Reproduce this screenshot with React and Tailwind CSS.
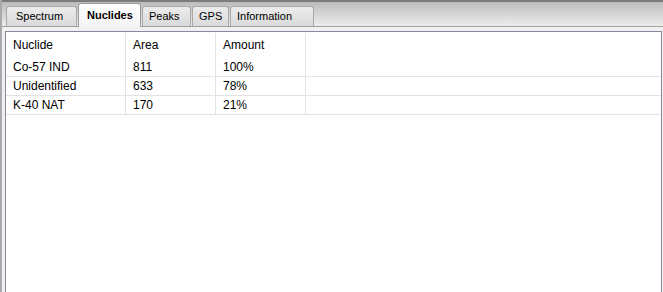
import React from "react";

const tabs = [
  { label: "Spectrum", w: "w-[71px]", pl: "pl-[9px]" },
  { label: "Nuclides", w: "w-[63px]", pl: "pl-[8px]" },
  { label: "Peaks", w: "w-[49px]", pl: "pl-[6px]" },
  { label: "GPS", w: "w-[37px]", pl: "pl-[6px]" },
  { label: "Information", w: "w-[84px]", pl: "pl-[6px]" },
];

const rows = [
  { nuclide: "Co-57 IND", area: "811", amount: "100%" },
  { nuclide: "Unidentified", area: "633", amount: "78%" },
  { nuclide: "K-40 NAT", area: "170", amount: "21%" },
];

const Tab = ({ tab, active }) =>
  active ? (
    <div
      className={`relative z-10 -mb-px flex h-[24px] items-center rounded-t-[3px] border border-b-0 border-[#9a9a9a] bg-gradient-to-b from-[#ffffff] to-[#f4f4f4] text-[11px] font-bold text-black ${tab.w} ${tab.pl}`}
    >
      {tab.label}
    </div>
  ) : (
    <div
      className={`flex h-[20px] items-center rounded-t-[3px] border border-b-0 border-[#a8a8a8] bg-gradient-to-b from-[#ececec] to-[#dadada] text-[11px] text-black ${tab.w} ${tab.pl}`}
    >
      {tab.label}
    </div>
  );

const Cell = ({ children, last }) => (
  <div
    className={`flex items-center pl-[7px] ${last ? "" : "border-r border-[#e3e3e3]"}`}
  >
    {children}
  </div>
);

export default function App() {
  return (
    <div
      className="flex h-[292px] w-[663px] flex-col overflow-hidden border-l-2 border-[#a9a9a9] bg-[#f0f0f0] text-black"
      style={{ fontFamily: '"Liberation Sans", Arial, sans-serif' }}
    >
      {/* tab strip */}
      <div className="flex h-[26px] shrink-0 items-end border-t-2 border-[#7c7c7c] bg-gradient-to-b from-[#bcbcbc] to-[#ededed] pl-[4px]">
        <div className="flex items-end gap-[1px]">
          {tabs.map((t) => (
            <Tab key={t.label} tab={t} active={t.label === "Nuclides"} />
          ))}
        </div>
      </div>
      <div className="h-[2px] shrink-0 border-t border-[#a0a0a0] bg-[#f0f0f0]" />

      {/* content */}
      <div className="flex flex-col pl-[3px] pr-[1px] pt-[3px]">
        <div className="h-[280px] border border-[#868a9a] bg-white pt-[1px] text-[12px]">
          <div className="grid h-[24px] grid-cols-[120px_90px_90px_1fr]">
            <Cell>Nuclide</Cell>
            <Cell>Area</Cell>
            <Cell>Amount</Cell>
            <Cell last />
          </div>
          {rows.map((r, i) => (
            <div
              key={r.nuclide}
              className={`grid grid-cols-[120px_90px_90px_1fr] border-b border-[#e3e3e3] ${i === 0 ? "h-[20px]" : "h-[19px]"}`}
            >
              <Cell>{r.nuclide}</Cell>
              <Cell>{r.area}</Cell>
              <Cell>{r.amount}</Cell>
              <Cell last />
            </div>
          ))}
        </div>
      </div>
    </div>
  );
}
